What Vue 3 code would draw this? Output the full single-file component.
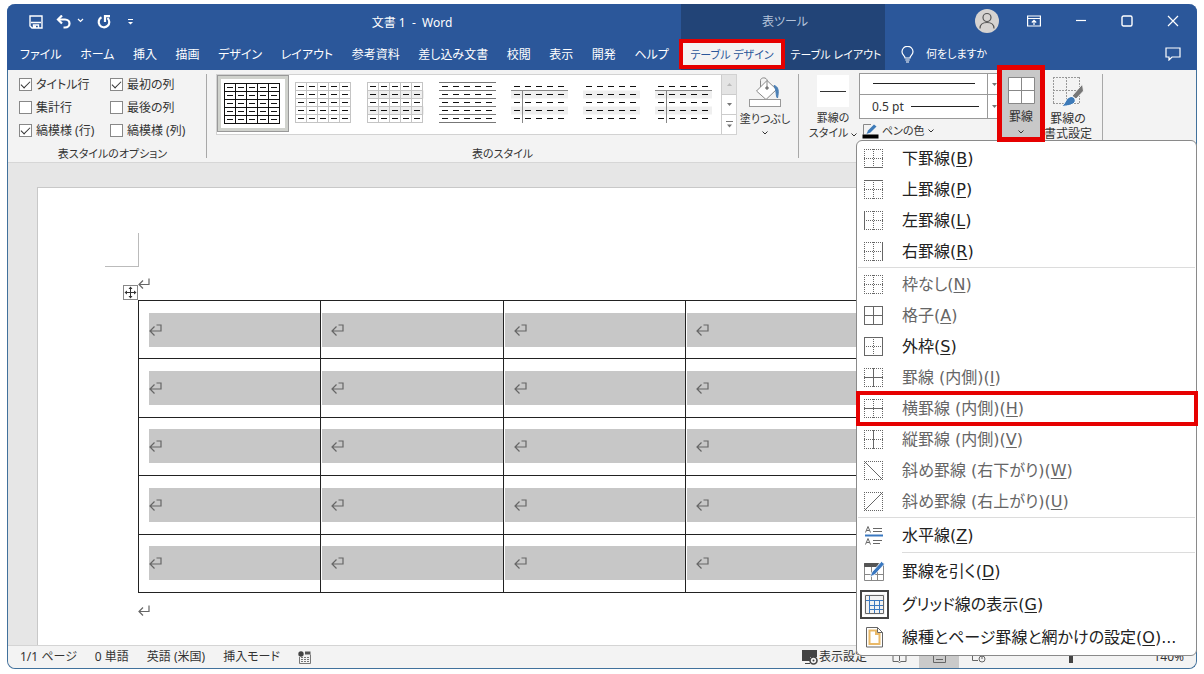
<script setup>
import { ref } from 'vue'

const tabs = ['ファイル', 'ホーム', '挿入', '描画', 'デザイン', 'レイアウト', '参考資料', '差し込み文書', '校閲', '表示', '開発', 'ヘルプ']

const options = ref([
  { id: 'o1', label: 'タイトル行', on: true },
  { id: 'o2', label: '最初の列', on: true },
  { id: 'o3', label: '集計行', on: false },
  { id: 'o4', label: '最後の列', on: false },
  { id: 'o5', label: '縞模様 (行)', on: true },
  { id: 'o6', label: '縞模様 (列)', on: false },
])

const thumbs = [
  { grid: '#111', selected: true },
  { grid: '#c4c4c4' },
  { grid: '#c4c4c4', band: true },
  { rules: true },
  { band: true, head: true, first: true },
  { band: true },
  { band: true, head: true, first: true },
]

/* Solid strokes of a border icon; every other stroke is dotted. */
const strokes = {
  t: 'M0 0.5H19', b: 'M0 18.5H19', l: 'M0.5 0V19', r: 'M18.5 0V19',
  h: 'M0 9.5H19', v: 'M9.5 0V19', d: 'M0.5 0.5L18.5 18.5', u: 'M0.5 18.5L18.5 0.5',
}
const base = ['t', 'b', 'l', 'r', 'h', 'v']
const frame = ['t', 'b', 'l', 'r']

const groups = [
  [
    { text: '下罫線', key: 'B', solid: ['b'] },
    { text: '上罫線', key: 'P', solid: ['t'] },
    { text: '左罫線', key: 'L', solid: ['l'] },
    { text: '右罫線', key: 'R', solid: ['r'] },
  ],
  [
    { text: '枠なし', key: 'N', solid: [], dim: true },
    { text: '格子', key: 'A', solid: base, dim: true },
    { text: '外枠', key: 'S', solid: frame },
    { text: '罫線 (内側)', key: 'I', solid: ['h', 'v'], dim: true },
    { text: '横罫線 (内側)', key: 'H', solid: ['h'], dim: true, marked: true },
    { text: '縦罫線 (内側)', key: 'V', solid: ['v'], dim: true },
    { text: '斜め罫線 (右下がり)', key: 'W', solid: ['d'], lines: frame, dim: true },
    { text: '斜め罫線 (右上がり)', key: 'U', solid: ['u'], lines: frame, dim: true },
  ],
]
const dotted = (item) => (item.lines || base).filter((s) => !item.solid.includes(s))
</script>

<template>
  <div class="desk">
    <div class="window">
      <header class="header">
        <div class="main">
          <div class="titlebar">
            <div class="qat">
              <button aria-label="上書き保存">
                <svg width="14" height="14" viewBox="0 0 14 14" fill="none" stroke="#fff" stroke-width="1.4"><path d="M1 1H13V13H3L1 11ZM2 7.5H12M4.5 13V10H9.5V13" /><path d="M6 10.5V13" stroke-width="2" /></svg>
              </button>
              <button aria-label="元に戻す">
                <svg width="28" height="14" viewBox="0 0 28 14" fill="none" stroke="#fff" stroke-width="2.2"><path d="M2 4.5H9C12 4.5 13.500 6.500 13.500 8.500S12 12.500 9 12.500H7.500" /><path d="M6 0.500L2 4.500L6 8.500" /><path d="M22 4L24.500 6.500L27 4" stroke-width="1.200" /></svg>
              </button>
              <button aria-label="やり直し">
                <svg width="14" height="14" viewBox="0 0 14 14" fill="none" stroke="#fff" stroke-width="2.2"><path d="M4.500 2.300A5.300 5.300 0 1 0 10.500 3" /><path d="M13 1.200H8V7" /></svg>
              </button>
              <button class="more" aria-label="クイック アクセスのカスタマイズ">
                <svg width="5" height="6" viewBox="0 0 5 6"><path d="M0 0H5V1H0ZM0 3H5L2.500 5.500Z" fill="#fff" /></svg>
              </button>
            </div>
            <div class="doc-title">文書 1&nbsp; -&nbsp; Word</div>
          </div>
          <nav class="tabs">
            <a v-for="t in tabs" :key="t" href="#">{{ t }}</a>
          </nav>
        </div>
        <div class="context">
          <div class="context-title">表ツール</div>
          <nav class="context-tabs">
            <a class="active" href="#">テーブル デザイン</a>
            <a href="#">テーブル レイアウト</a>
          </nav>
        </div>
        <div class="side">
          <div class="controls">
            <svg class="avatar" width="24" height="24" viewBox="0 0 24 24"><circle cx="12" cy="12" r="12" fill="#d6d3d1" /><g fill="none" stroke="#555" stroke-width="1.200"><circle cx="12" cy="8.500" r="4" /><path d="M5 19.500C5 15.500 8 13.500 12 13.500S19 15.500 19 19.500" /></g></svg>
            <button aria-label="リボンの表示オプション"><svg width="14" height="12" viewBox="0 0 14 12" fill="none" stroke="#fff" stroke-width="1.200"><path d="M0.600 1H13.400V11H0.600ZM0.600 3.500H13.400M7 10V5.500M4.800 7.500L7 5.300L9.200 7.500" /></svg></button>
            <button aria-label="最小化"><svg width="12" height="12" viewBox="0 0 12 12"><path d="M1 5.500H11" stroke="#fff" stroke-width="1.200" /></svg></button>
            <button aria-label="最大化"><svg width="12" height="12" viewBox="0 0 12 12"><rect x="1" y="1" width="10" height="10" rx="1.500" fill="none" stroke="#fff" stroke-width="1.400" /></svg></button>
            <button aria-label="閉じる"><svg width="12" height="12" viewBox="0 0 12 12"><path d="M1 1L11 11M11 1L1 11" stroke="#fff" stroke-width="1.200" /></svg></button>
          </div>
          <div class="tell">
            <svg width="13" height="17" viewBox="0 0 13 17" fill="none" stroke="#fff" stroke-width="1.200"><path d="M4 12C4 9.500 1 9 1 5.800A5.300 5.300 0 0 1 12 5.800C12 9 9 9.500 9 12ZM4.300 14H8.700M5 16H8" /></svg>
            <a href="#">何をしますか</a>
            <button class="comment" aria-label="コメント"><svg width="16" height="14" viewBox="0 0 16 14" fill="none" stroke="#fff" stroke-width="1.200"><path d="M1 1H15V10H7L4 13V10H1Z" /></svg></button>
          </div>
        </div>
      </header>

      <section class="ribbon">
        <div class="group opts">
          <div class="checks">
            <label v-for="o in options" :key="o.id" :for="o.id"><input :id="o.id" v-model="o.on" type="checkbox" />{{ o.label }}</label>
          </div>
          <div class="caption">表スタイルのオプション</div>
        </div>

        <div class="group styles">
          <div class="styles-row">
            <div class="gallery">
              <button v-for="(t, n) in thumbs" :key="n" class="thumb" :class="{ selected: t.selected }" :aria-label="'表のスタイル ' + (n + 1)">
                <svg width="57" height="42" viewBox="0 0 57 42">
                  <g v-if="t.band" fill="#efefef"><rect x="0" y="8.500" width="57" height="8" /><rect x="0" y="24.500" width="57" height="8" /></g>
                  <g v-if="t.grid" :stroke="t.grid">
                    <path v-for="i in 6" :key="'v' + i" :d="`M${(i - 1) * 11 + 0.5} 0V41`" />
                    <path v-for="i in 6" :key="'h' + i" :d="`M0 ${(i - 1) * 8 + 0.5}H56`" />
                  </g>
                  <g v-if="t.rules" stroke="#777"><path v-for="i in 6" :key="i" :d="`M0 ${(i - 1) * 8 + 0.5}H57`" /></g>
                  <path v-if="t.head" d="M0 8.500H57" stroke="#888" />
                  <path v-if="t.first" d="M11.500 8.500V41" stroke="#888" />
                  <path v-for="j in 5" :key="'d' + j" :d="`M3 ${j * 8 - 3.5}H57`" stroke="#111" stroke-width="1.200" stroke-dasharray="6 5" />
                </svg>
              </button>
              <div class="scroll">
                <button class="off" aria-label="前の行"><svg width="5" height="3"><path d="M0 3L2.500 0L5 3Z" fill="#bbb" /></svg></button>
                <button aria-label="次の行"><svg width="5" height="3"><path d="M0 0L2.500 3L5 0Z" fill="#777" /></svg></button>
                <button aria-label="その他"><svg width="7" height="7"><path d="M0 0H7V1H0ZM1 3.500L3.500 6.500L6 3.500Z" fill="#777" /></svg></button>
              </div>
            </div>
            <button class="tool fill">
              <svg width="34" height="32" viewBox="0 0 34 32" fill="none" stroke="#888"><path d="M8.500 15L19 4.500L28.500 13.500L18 23.500Z" fill="#fff" /><path d="M12.500 11V4.500C12.500 1 19 1 19 4.500V12" /><circle cx="19" cy="12" r="1.300" fill="#666" /><path d="M26 9.500C30.500 10.500 31 15 29.500 22C27.500 20 29 15.500 26 9.500Z" fill="#4a7fb5" stroke="#4a7fb5" /><rect x="1.500" y="23.500" width="31" height="7" fill="#fff" stroke="#999" /></svg>
              <span>塗りつぶし</span>
              <svg class="chev" width="6" height="4"><path d="M0.500 0.500L3 3L5.500 0.500" /></svg>
            </button>
          </div>
          <div class="caption">表のスタイル</div>
        </div>

        <div class="group frames">
          <button class="tool style">
            <svg width="32" height="32"><rect width="32" height="32" fill="#fff" /><path d="M3 16.500H29" stroke="#333" /></svg>
            <span>罫線の<br />スタイル <svg class="chev" width="6" height="4"><path d="M0.500 0.500L3 3L5.500 0.500" /></svg></span>
          </button>
          <div class="pens">
            <div class="picker">
              <select aria-label="ペンのスタイル"><option></option></select>
              <svg class="rule" width="102" height="1"><path d="M0 0.500H102" stroke="#222" /></svg>
              <span class="drop"><svg width="5" height="3"><path d="M0 0L2.500 3L5 0Z" fill="#777" /></svg></span>
            </div>
            <div class="picker">
              <select aria-label="ペンの太さ"><option>0.5 pt</option></select>
              <svg class="rule" width="68" height="1"><path d="M0 0.500H68" stroke="#222" /></svg>
              <span class="drop"><svg width="5" height="3"><path d="M0 0L2.500 3L5 0Z" fill="#777" /></svg></span>
            </div>
            <button class="pen-color">
              <svg width="17" height="15" viewBox="0 0 17 15"><path d="M1.500 10.500V0.500H9" fill="none" stroke="#888" /><path d="M4.500 10L6 6.500L12 0.500L14.500 2.500L8.500 8.500Z" fill="#3d7ab8" /><rect x="0.500" y="10.500" width="16" height="4" fill="#000" /></svg>
              ペンの色 <svg class="chev" width="6" height="4"><path d="M0.500 0.500L3 3L5.500 0.500" /></svg>
            </button>
          </div>
          <button class="tool borders">
            <svg width="27" height="28" viewBox="0 0 27 28"><path d="M0.500 0.500H26.500V26.500H0.500ZM13.500 0.500V26.500M0.500 13.500H26.500" fill="#fff" stroke="#888" /></svg>
            <span>罫線</span>
            <svg class="chev" width="6" height="4"><path d="M0.500 0.500L3 3L5.500 0.500" /></svg>
          </button>
          <button class="tool painter">
            <svg width="32" height="32" viewBox="0 0 32 32"><path d="M1 1.500H28M1 27.500H28M1.500 1V28M27.500 1V28M14.500 1V28M1 14.500H28" stroke="#999" stroke-dasharray="2 1" /><path d="M30.500 8L31.500 15L24 23L20 20Z" fill="#777" stroke="#f3f3f3" /><path d="M19 20.500C22 20.500 24 23.500 23 26C20 30 14 30 9 30.500C14 28 13 22 19 20.500Z" fill="#3d7ab8" stroke="#fff" /></svg>
            <span>罫線の<br />書式設定</span>
          </button>
        </div>
      </section>

      <main class="canvas">
        <article class="sheet">
          <div class="corner"></div>
          <div class="body">
            <svg class="mark" width="12" height="12" viewBox="0 0 12 12"><path d="M11 0.500V6.500H1M5 2.500L1 6.500L5 10.500" /></svg>
            <div class="table-wrap">
              <svg class="handle" width="15" height="15" viewBox="0 0 15 15"><rect x="0.500" y="0.500" width="14" height="14" fill="#fff" stroke="#888" /><path d="M7.500 2V13M2 7.500H13" stroke="#333" /><path d="M7.500 1.500L9.500 4H5.500ZM7.500 13.500L9.500 11H5.500ZM1.500 7.500L4 5.500V9.500ZM13.500 7.500L11 5.500V9.500Z" fill="#333" /></svg>
              <table>
                <tbody>
                  <tr v-for="r in 5" :key="r">
                    <td v-for="c in 4" :key="c"><div class="cell"><svg class="mark" width="13" height="12" viewBox="0 0 13 12"><path d="M7.500 1H12V7H1M5.500 2.500L1 7L5.500 11.500" /></svg></div></td>
                  </tr>
                </tbody>
              </table>
            </div>
            <svg class="mark" width="12" height="12" viewBox="0 0 12 12"><path d="M11 0.500V6.500H1M5 2.500L1 6.500L5 10.500" /></svg>
          </div>
        </article>
      </main>

      <footer class="status">
        <span>1/1 ページ</span><span>0 単語</span><span>英語 (米国)</span><span>挿入モード</span>
        <svg width="13" height="13" viewBox="0 0 13 13"><circle cx="3" cy="3" r="2.700" fill="#444" /><path d="M7 0.500H12.500V3.500H7Z" fill="#555" /><path d="M1.500 6V12.500H12.500V3.500" fill="none" stroke="#777" /><path d="M3 6.500H11M3 8.500H11M3 10.500H11" stroke="#777" stroke-dasharray="2 1" /></svg>
        <div class="views">
          <button class="display"><svg width="16" height="15" viewBox="0 0 16 15"><path d="M0 0H15V7H8V11H0Z" fill="#444" /><path d="M3 13.500H8" stroke="#444" /><circle cx="11.500" cy="10.500" r="3.500" fill="#f3f3f3" stroke="#444" stroke-width="1.600" /><circle cx="11.500" cy="10.500" r="1" fill="#444" /></svg>表示設定</button>
          <button class="view" aria-label="閲覧モード"><svg width="15" height="12" fill="none" stroke="#666"><path d="M1 1.500H6.500L7.500 3L8.500 1.500H14V10.500H9L7.500 11.500L6 10.500H1ZM7.500 3V10" /></svg></button>
          <button class="view on" aria-label="印刷レイアウト"><svg width="13" height="12" fill="none" stroke="#666"><path d="M0.500 0.500H12.500V11.500H0.500ZM3 8.500H10" /></svg></button>
          <button class="view" aria-label="Web レイアウト"><svg width="14" height="12" fill="none" stroke="#666"><path d="M0.500 0.500H10V8M0.500 0.500V9.500H6" /><circle cx="10" cy="8" r="3" /></svg></button>
          <span class="zoom"><i></i></span>
          <span class="percent">140%</span>
        </div>
      </footer>

      <div class="menu" role="menu">
        <template v-for="(g, n) in groups" :key="n">
          <button v-for="m in g" :key="m.key" role="menuitem" :class="{ dim: m.dim, marked: m.marked }">
            <svg class="icon" width="21" height="19" viewBox="0 0 21 19" fill="none" stroke="#666">
              <path v-for="s in dotted(m)" :key="s" :d="strokes[s]" stroke-dasharray="1 1" />
              <path v-for="s in m.solid" :key="s" :d="strokes[s]" />
            </svg>
            <span>{{ m.text }}(<u>{{ m.key }}</u>)</span>
          </button>
          <hr />
        </template>
        <button role="menuitem" class="tall">
          <svg class="icon" width="21" height="19" viewBox="0 0 21 19" fill="none" stroke="#666"><path d="M1.500 6.500L4 0.500L6.500 6.500M2.500 4.500H5.500M1.500 18.500L4 12.500L6.500 18.500M2.500 16.500H5.500M9 2.500H18M9 5.500H18M9 14.500H18M9 17.500H16" /><path d="M1 9.500H19" stroke="#3a78c0" stroke-width="2" /></svg>
          <span>水平線(<u>Z</u>)</span>
        </button>
        <hr class="inset" />
        <button role="menuitem" class="tall">
          <svg class="icon" width="21" height="21" viewBox="0 0 21 21" fill="none" stroke="#888"><path d="M0.500 2.500H19.500V19.500H0.500ZM0.500 13.500H19.500M7.500 6V19.500M13.500 6V19.500" /><path d="M0.500 2.500H14V5.500H0.500Z" fill="#555" stroke="#555" /><path d="M6 16L8 11L17.500 0.500L20.500 3L11 13.500Z" fill="#3a78c0" stroke="#fff" stroke-width="0.800" /></svg>
          <span>罫線を引く(<u>D</u>)</span>
        </button>
        <button role="menuitem" class="tall checked">
          <svg class="icon" width="21" height="21" viewBox="-1 -1 21 21" fill="none" stroke="#3a78c0"><path d="M4.500 1V18M9.500 5V18M14.500 5V18M1 5.500H18M5 10.500H18M5 14.500H18" /><path d="M0.500 0.500H18.500V18.500H0.500Z" stroke="#666" /></svg>
          <span>グリッド線の表示(<u>G</u>)</span>
        </button>
        <button role="menuitem" class="tall">
          <svg class="icon" width="21" height="21" viewBox="0 0 21 21" fill="none"><path d="M2.500 0.500H13.500L18.500 5.500V20H2.500Z" fill="#fff" stroke="#666" /><path d="M5.500 3.500H12V7H15.500V17H5.500Z" stroke="#eab968" stroke-width="2" /><path d="M13.500 0.500V5.500H18.500Z" fill="#fff" stroke="#666" /></svg>
          <span>線種とページ罫線と網かけの設定(<u>O</u>)...</span>
        </button>
      </div>
    </div>
  </div>
</template>

<style>
body { background: #fff; }
</style>

<style scoped>
* { box-sizing: border-box; }
.desk {
  display: flex;
  min-height: 100vh;
  padding: 4px 7px 5px;
  font-family: "Noto Sans", "Noto Sans CJK JP", sans-serif;
  font-feature-settings: "palt";
  font-size: 12px;
  line-height: 16px;
  color: #333;
  white-space: nowrap;
}
svg { display: block; flex: none; }
a { color: inherit; text-decoration: none; }
button, select {
  margin: 0;
  padding: 0;
  border: 0;
  background: none;
  color: inherit;
  font: inherit;
  font-feature-settings: inherit;
  white-space: nowrap;
}
.window {
  position: relative;
  flex: 1;
  min-width: 0;
  display: flex;
  flex-direction: column;
  border: 1px solid #41719c;
  border-top: 0;
  border-radius: 8px;
  background: #e6e6e6;
}

/* header */
.header {
  display: flex;
  height: 66px;
  margin: 0 -1px;
  border-radius: 8px 8px 0 0;
  background: #2b579a;
  color: #fff;
}
.main { flex: none; width: 674px; }
.titlebar { display: flex; align-items: center; height: 36px; }
.qat { display: flex; align-items: center; gap: 13px; width: 136px; padding-left: 22px; }
.more { padding-left: 4px; }
.doc-title { flex: 1; text-align: center; line-height: 18px; padding-top: 2px; }
.tabs { display: flex; justify-content: space-between; padding: 7px 12px 0 13px; }
.context { flex: none; width: 204px; background: #224477; }
.context-title { height: 36px; line-height: 36px; padding-left: 4px; text-align: center; color: #b4c3da; }
.context-tabs { display: flex; height: 30px; line-height: 30px; font-size: 11px; }
.context-tabs a { flex: 1; display: flex; justify-content: center; }
.context-tabs .active {
  height: 30px;
  margin: -1px 2px 0 -2px;
  border: 4px solid #e60000;
  background: #f3f3f3;
  color: #2b579a;
  line-height: 24px;
}
.side { flex: 1; }
.controls { display: flex; align-items: center; justify-content: flex-end; gap: 34px; height: 34px; padding-right: 18px; }
.controls .avatar { margin: 0 -6px 0 0; }
.tell { display: flex; align-items: center; gap: 12px; height: 32px; padding: 0 16px; font-size: 11px; }
.comment { margin-left: auto; }

/* ribbon */
.ribbon { display: flex; height: 93px; padding-top: 4px; border-bottom: 1px solid #d6d6d6; background: #f3f3f3; }
.group { flex: none; height: 84px; border-right: 1px solid #a8a8a8; }
.caption { text-align: center; font-size: 11px; line-height: 18px; }
.opts { width: 199px; padding-left: 11px; }
.checks { display: grid; grid-template-columns: 91px 91px; grid-auto-rows: 23px; margin: -1px 0 3px; }
.checks label { display: flex; align-items: center; gap: 4px; }
.checks input {
  appearance: none;
  display: grid;
  place-items: center;
  flex: none;
  width: 13px;
  height: 13px;
  margin: 0;
  border: 1px solid #888;
  background: #fff;
}
.checks input:checked::before {
  content: "";
  width: 8px;
  height: 4px;
  margin-bottom: 3px;
  border: solid #333;
  border-width: 0 0 1px 1px;
  transform: rotate(-45deg);
}
.styles { width: 592px; padding-left: 9px; }
.styles-row { display: flex; height: 71px; }
.styles .caption { padding-right: 9px; }
.gallery { display: flex; height: 61px; border: 1px solid #d2d2d2; background: #fff; }
.thumb { display: flex; align-items: center; width: 72px; padding: 0 0 4px 6px; }
.thumb.selected { border: 4px solid #d0d2cd; outline: 1px solid #999; outline-offset: -1px; padding: 0 0 0 3px; margin-bottom: 2px; }
.scroll { display: flex; flex-direction: column; width: 15px; border-left: 1px solid #ccc; }
.scroll button { flex: 1; display: grid; place-items: center; border-bottom: 1px solid #ccc; }
.scroll button:last-child { border-bottom: 0; }
.scroll .off { background: #e4e4e4; }
.tool { display: flex; flex-direction: column; align-items: center; font-size: 11px; line-height: 15px; }
.chev { display: inline-block; fill: none; stroke: #333; }
.fill { width: 56px; gap: 3px; padding-top: 2px; }
.fill .chev, .borders .chev { margin-top: 2px; }
.frames { display: flex; width: 304px; padding-left: 8px; }
.style { width: 52px; gap: 3px; padding-top: 1px; }
.pens { display: flex; flex-direction: column; width: 141px; }
.picker { position: relative; height: 22px; margin-top: -1px; }
.picker + .picker { height: 25px; }
.picker select { appearance: none; width: 100%; height: 100%; padding-left: 12px; border: 1px solid #999; background: #fff; }
.picker .rule { position: absolute; top: 10px; left: 14px; }
.picker + .picker .rule { top: 12px; left: 52px; }
.drop { position: absolute; top: 0; bottom: 0; right: 0; display: grid; place-items: center; width: 13px; border-left: 1px solid #999; }
.pen-color { display: flex; align-items: center; gap: 3px; height: 24px; padding-left: 3px; font-size: 11px; }
.borders {
  position: relative;
  z-index: 3;
  width: 48px;
  height: 77px;
  margin: -9px 0 0 -3px;
  border: 5px solid #e60000;
  background: #c8c8c8;
  padding-top: 7px;
  gap: 4px;
}
.borders, .painter { font-size: 12px; }
.painter { width: 46px; gap: 3px; padding-top: 2px; }

/* document */
.canvas { flex: 1; display: flex; padding: 24px 0 0 29px; }
.sheet { flex: 1; padding: 45px 0 0 67px; border: 1px solid #c8c8c8; border-width: 1px 0 0 1px; background: #fff; }
.corner { width: 34px; height: 34px; border: solid #bbb; border-width: 0 1px 1px 0; }
.body { margin-left: 33px; padding-top: 11px; }
.mark { fill: none; stroke: #666; stroke-width: 1.2; }
.table-wrap { position: relative; margin: 10px 0 12px; }
.handle { position: absolute; top: -15px; left: -15px; }
table { width: 730px; height: 293px; border-collapse: collapse; table-layout: fixed; }
td { padding: 0; border: 1px solid #222; }
.cell { display: flex; align-items: center; height: 34px; margin-left: 1px; padding-left: 9px; background: #c7c7c7; }
td:first-child .cell { margin-left: 10px; padding-left: 0; }

/* status bar */
.status { display: flex; align-items: center; gap: 18px; height: 23px; padding: 0 12px; border-top: 1px solid #d4d4d4; border-radius: 0 0 8px 8px; background: #f3f3f3; }
.views { display: flex; align-items: center; margin-left: auto; height: 100%; width: 382px; }
.display { display: flex; align-items: center; width: 77px; gap: 1px; }
.view { display: grid; place-items: center; width: 40px; height: 22px; }
.view.on { background: #cacaca; }
.zoom { display: flex; justify-content: center; width: 144px; }
.zoom i { width: 4px; height: 12px; background: #444; }
.percent { margin-left: auto; }

/* borders menu */
.menu {
  position: absolute;
  top: 136px;
  right: -1px;
  z-index: 2;
  width: 341px;
  padding: 2px 1px 1px;
  border: 1px solid #8a8a8a;
  border-radius: 6px;
  background: #fff;
  color: #222;
  font-family: "DejaVu Sans", "Noto Sans CJK JP", sans-serif;
  font-size: 16px;
  line-height: 20px;
}
.menu button { display: flex; align-items: center; gap: 17px; width: 100%; height: 31px; padding-left: 6px; text-align: left; }
.menu .tall { height: 33px; }
.menu .dim { color: #666; }
.menu .marked { width: 342px; height: 35px; margin: -2px; padding-left: 4px; border: 4px solid #e60000; }
.menu hr { margin: 0 0 1px; border: 0; border-top: 1px solid #dcdcdc; }
.menu hr.inset { margin: 0 0 2px 44px; }
.menu .checked .icon { outline: 2px solid #444; outline-offset: 2px; background: #f2f2f2; }
.menu u { text-underline-offset: 2px; text-decoration-thickness: 1px; }
</style>
